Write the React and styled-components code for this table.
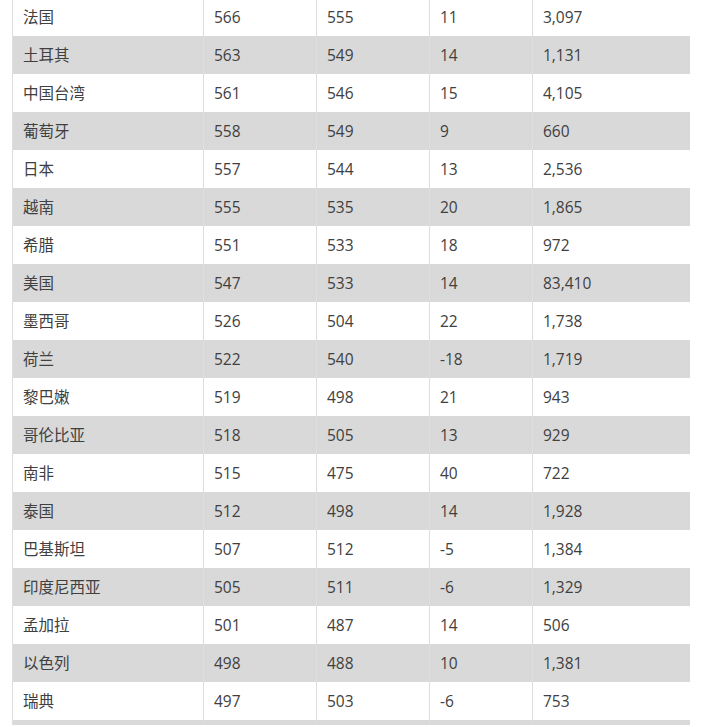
import React from "react";
import styled, { createGlobalStyle } from "styled-components";

const Global = createGlobalStyle`
  html, body { margin: 0; padding: 0; background: #ffffff; }
  body { font-family: "Open Sans", "Noto Sans CJK SC", sans-serif; }
`;

const Page = styled.div`
  padding: 0 13px 0 12px;
  margin-top: -2px;
  height: 727px;
  overflow: hidden;
`;

const Table = styled.table`
  width: 677px;
  border-collapse: collapse;
  table-layout: fixed;
  color: #404040;
  font-size: 15.5px;
`;

const Row = styled.tr`
  height: 38px;
  background: ${(p) => (p.$shade ? "#d9d9d9" : "#ffffff")};
`;

const Cell = styled.td`
  padding: 0 0 0 10px;
  border-left: 1px solid #dedede;
  line-height: 38px;
  white-space: nowrap;
  vertical-align: middle;
`;

const Col = styled.col`
  width: ${(p) => p.$w}px;
`;

const data = [
  ["法国", "566", "555", "11", "3,097"],
  ["土耳其", "563", "549", "14", "1,131"],
  ["中国台湾", "561", "546", "15", "4,105"],
  ["葡萄牙", "558", "549", "9", "660"],
  ["日本", "557", "544", "13", "2,536"],
  ["越南", "555", "535", "20", "1,865"],
  ["希腊", "551", "533", "18", "972"],
  ["美国", "547", "533", "14", "83,410"],
  ["墨西哥", "526", "504", "22", "1,738"],
  ["荷兰", "522", "540", "-18", "1,719"],
  ["黎巴嫩", "519", "498", "21", "943"],
  ["哥伦比亚", "518", "505", "13", "929"],
  ["南非", "515", "475", "40", "722"],
  ["泰国", "512", "498", "14", "1,928"],
  ["巴基斯坦", "507", "512", "-5", "1,384"],
  ["印度尼西亚", "505", "511", "-6", "1,329"],
  ["孟加拉", "501", "487", "14", "506"],
  ["以色列", "498", "488", "10", "1,381"],
  ["瑞典", "497", "503", "-6", "753"],
  ["", "", "", "", ""],
];

const widths = [191, 113, 113, 103, 157];

export default function App() {
  return (
    <>
      <Global />
      <Page>
        <Table>
          <colgroup>
            {widths.map((w, i) => (
              <Col key={i} $w={w} />
            ))}
          </colgroup>
          <tbody>
            {data.map((r, i) => (
              <Row key={i} $shade={i % 2 === 1}>
                {r.map((c, j) => (
                  <Cell key={j}>{c}</Cell>
                ))}
              </Row>
            ))}
          </tbody>
        </Table>
      </Page>
    </>
  );
}
